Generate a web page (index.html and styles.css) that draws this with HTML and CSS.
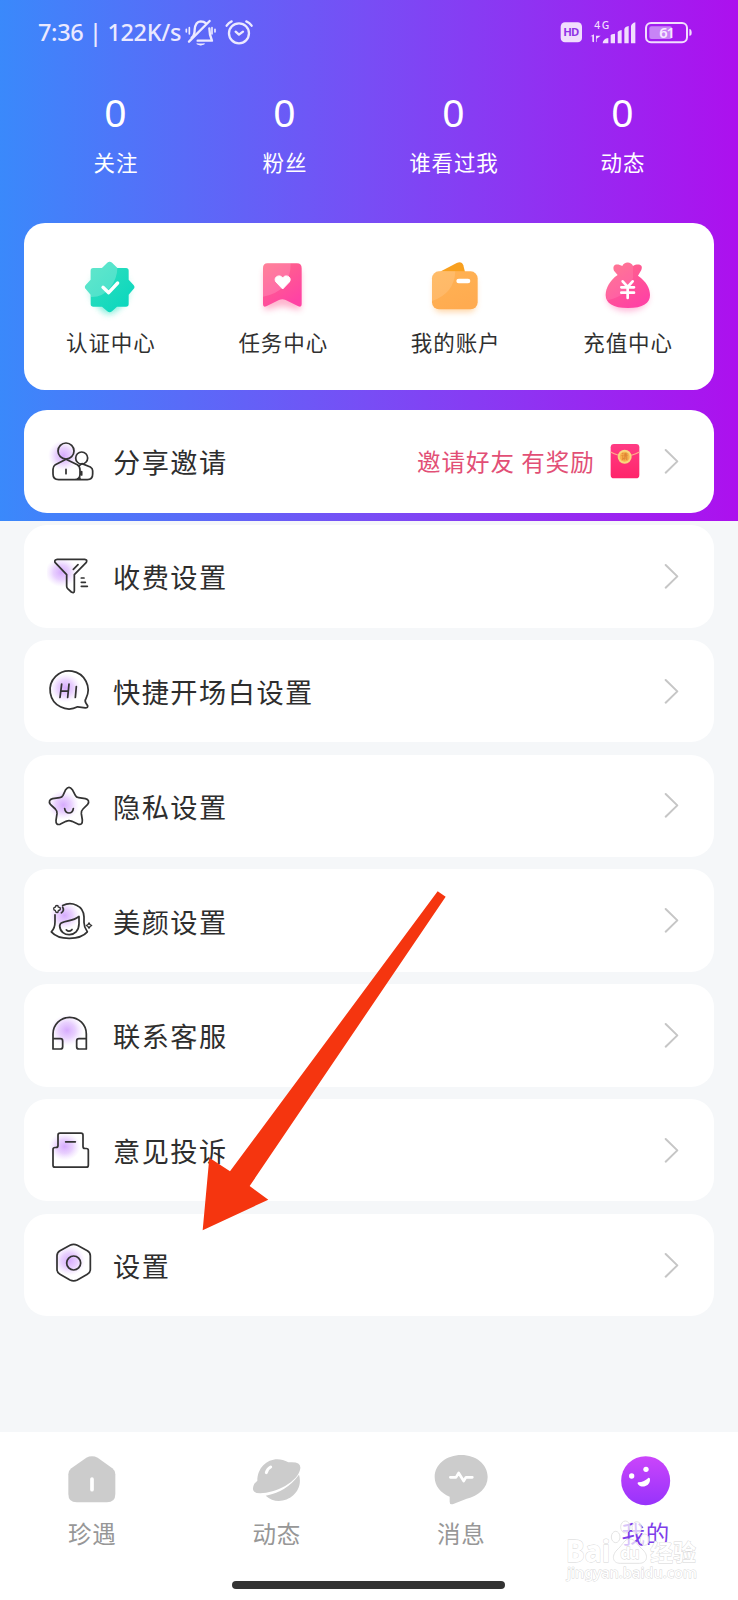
FILE: index.html
```html
<!DOCTYPE html>
<html lang="zh-CN">
<head>
<meta charset="utf-8">
<title>我的</title>
<link rel="stylesheet" href="styles.css">
</head>
<body>
<svg class="defs" width="0" height="0">
  <defs>
    <radialGradient id="glow"><stop offset="0" stop-color="#cf9bfd" stop-opacity=".85"/><stop offset=".5" stop-color="#d9b0fd" stop-opacity=".6"/><stop offset="1" stop-color="#e6ccff" stop-opacity="0"/></radialGradient>
    <linearGradient id="teal" x1="0" y1="0" x2="1" y2="1"><stop offset="0" stop-color="#37e0bd"/><stop offset="1" stop-color="#06d6be"/></linearGradient>
    <linearGradient id="pink" x1="0" y1="0" x2=".6" y2="1"><stop offset="0" stop-color="#ff6a85"/><stop offset="1" stop-color="#ff43a4"/></linearGradient>
    <linearGradient id="orange" x1="0" y1="0" x2=".5" y2="1"><stop offset="0" stop-color="#ffb354"/><stop offset="1" stop-color="#ffab50"/></linearGradient>
    <linearGradient id="violet" x1="0" y1="0" x2="0" y2="1"><stop offset="0" stop-color="#cb45fb"/><stop offset="1" stop-color="#9733fb"/></linearGradient>
    <linearGradient id="packet" x1="0" y1="0" x2="0" y2="1"><stop offset="0" stop-color="#ff3c84"/><stop offset="1" stop-color="#ff246a"/></linearGradient>
    <filter id="blur" x="-40%" y="-40%" width="180%" height="180%"><feGaussianBlur stdDeviation="10"/></filter>
    <symbol id="chevron" viewBox="0 0 48 80"><path d="M5 6 40 40 5 74" fill="none" stroke="#c6c6c6" stroke-width="6" stroke-linecap="round" stroke-linejoin="round"/></symbol>
  </defs>
</svg>
<div class="screen">
  <header class="hero">
    <div class="status">
      <span class="clock">7:36 | 122K/s</span>
      <svg class="status-left" viewBox="550 50 220 90" fill="none" stroke="#ebe9ff" stroke-width="7" stroke-linecap="round" stroke-linejoin="round">
        <path d="M576 112Q585 105 585 88Q587 64 603 63Q613 63 619 69M629 84Q629 104 637 121H594"/><path d="M568 124 630 62"/><path d="M592 131Q603 139 614 131Z" fill="#ebe9ff" stroke-width="2"/><path d="M560 87V95M569 82V101M637 82V101M646 87V95" stroke-width="5"/>
        <circle cx="718" cy="99" r="30"/><path d="M708 94 718 103 730 94M681 76Q687 67 696 63M740 63Q750 67 756 76"/>
      </svg>
      <svg class="status-right" viewBox="580 50 410 90">
        <rect x="588" y="66" width="64" height="60" rx="13" fill="#f1defd"/><text class="hd" x="596" y="108" textLength="48">HD</text>
        <text class="net" x="689" y="87" textLength="45">4G</text>
        <g fill="#f1defd"><path d="M683 124V108H677L688 102V126ZM694 124V106H708L696 115V126Z"/><path d="M714 129Q715 115 731 113V129ZM738 104Q740 101 751 100V129H738ZM759 95Q761 90 771 89V129H759ZM779 86Q781 79 792 77V129H779ZM799 77Q801 69 812 66V129H799Z"/><rect x="854" y="78" width="68" height="38" rx="6" fill="#c884f6"/><path d="M974 86Q981 87 981 97T974 106Z"/></g>
        <rect x="844" y="68" width="123" height="58" rx="15" fill="none" stroke="#f1defd" stroke-width="6"/><text class="bat" x="884" y="114" textLength="47">61</text>
      </svg>
    </div>
    <div class="stats">
      <div class="stat"><b>0</b><span>关注</span></div>
      <div class="stat"><b>0</b><span>粉丝</span></div>
      <div class="stat"><b>0</b><span>谁看过我</span></div>
      <div class="stat"><b>0</b><span>动态</span></div>
    </div>
  </header>

  <main class="content">
    <section class="quick">
      <div class="quick-item">
        <svg viewBox="226 125 210 210">
          <g id="seal"><path d="M282 248Q300 315 330 312T378 248Z" fill="#59e9cf" opacity=".6" filter="url(#blur)"/><circle cx="330" cy="238" r="62" fill="#6be9d3" opacity=".4" filter="url(#blur)"/></g>
          <path d="M323 157Q330 151 337 157L353 173H379Q387 173 387 181V208L401 223Q408 230 401 237L387 253V281Q387 289 379 289H352L337 303Q330 309 323 303L307 289H281Q273 289 273 281V253L259 237Q252 230 259 223L273 208V181Q273 173 281 173H307Z" fill="url(#teal)"/>
          <path d="M323 157Q330 151 337 157L353 173Q353 205 331 233T274 260L273 253L259 237Q252 230 259 223L273 208V181Q273 173 281 173H307Z" fill="#fff" opacity=".22"/>
          <path d="M310 231 327 247 354 218" fill="none" stroke="#fff" stroke-width="10" stroke-linecap="round" stroke-linejoin="round"/>
        </svg><span>认证中心</span>
      </div>
      <div class="quick-item">
        <svg viewBox="744 125 210 210">
          <path d="M793 180H902V300L847 288 793 300Z" fill="#ff5a93" opacity=".45" filter="url(#blur)"/>
          <path d="M803 159H891Q905 159 905 174V282Q905 292 895 288L857 269Q847 265 837 269L799 288Q789 292 789 282V174Q789 159 803 159Z" fill="url(#pink)"/>
          <path d="M803 159H872Q872 245 789 259V174Q789 159 803 159Z" fill="#fff" opacity=".16"/>
          <path d="M848 236 828 215C818 201 839 189 848 203C857 189 878 201 868 215Z" fill="#fff" stroke="#fff" stroke-width="3" stroke-linejoin="round"/>
        </svg><span>任务中心</span>
      </div>
      <div class="quick-item">
        <svg viewBox="157 125 210 210">
          <rect x="200" y="200" width="124" height="104" rx="18" fill="#ffb057" opacity=".55" filter="url(#blur)"/>
          <path d="M217 184 267 158Q282 151 287 165L292 185Z" fill="#f8a01f"/>
          <rect x="193" y="183" width="137" height="114" rx="21" fill="url(#orange)"/>
          <path d="M214 183H263Q260 250 193 272V204Q193 183 214 183Z" fill="#fff" opacity=".13"/>
          <rect x="266" y="205" width="42" height="14" rx="7" fill="#fff"/>
        </svg><span>我的账户</span>
      </div>
      <div class="quick-item">
        <svg viewBox="674 125 210 210">
          <ellipse cx="778" cy="261" rx="62" ry="42" fill="#ff5aa5" opacity=".42" filter="url(#blur)"/>
          <path id="bag" d="M748 194 737 181C730 160 748 159 762 167C767 153 789 153 794 167C808 159 826 162 819 179L809 196C835 214 845 235 845 254C845 279 824 293 779 293S712 279 712 254C712 234 724 210 748 194Z" fill="url(#pink)"/>
          <path d="M748 194 737 181C730 160 748 159 762 167C767 153 789 153 794 167V202Q784 255 716 270Q704 224 748 194Z" fill="#fff" opacity=".1"/>
          <path d="M763 213 778 230 793 213M778 230V263M759 231H797M759 247H797" fill="none" stroke="#fff" stroke-width="8" stroke-linecap="round"/>
        </svg><span>充值中心</span>
      </div>
    </section>

    <div class="rows">
      <div class="row">
        <svg class="icon" viewBox="141 109 150 150"><ellipse class="halo" cx="190" cy="168" rx="46" ry="46"/><circle cx="198" cy="154" r="24"/><path d="M198 179 232 195Q240 200 240 211V224Q240 240 224 240H176Q159 240 159 223V209Q159 200 166 195ZM240 236Q239 240 232 240H262Q278 240 278 223V213Q278 206 271 202L246 192 238 198M198 209V222M245 216V226"/><circle cx="245" cy="175" r="18"/></svg>
        <span class="label">分享邀请</span><span class="promo">邀请好友 有奖励</span>
        <svg class="packet" viewBox="655 132 90 110"><rect x="657" y="135" width="86" height="103" rx="10" fill="url(#packet)"/><path d="M657 159Q700 183 743 159" fill="none" stroke="#ffad8a" stroke-width="4"/><circle cx="699" cy="173" r="21" fill="#f8d77e"/><circle cx="699" cy="173" r="15" fill="#f7b34f"/><text class="coin" x="699" y="180">请</text></svg>
        <svg class="chevron"><use href="#chevron"/></svg>
      </div>
      <div class="row">
        <svg class="icon" viewBox="141 454 150 150"><ellipse class="halo" cx="184" cy="518" rx="48" ry="44"/><path d="M172 479H254Q263 480 259 488L223 525V573Q223 582 214 577L203 567Q200 564 200 560V525L165 488Q162 480 172 479ZM234 495 220 509M244 535H252M244 548H256M244 560H262"/></svg>
        <span class="label">收费设置</span><svg class="chevron"><use href="#chevron"/></svg>
      </div>
      <div class="row">
        <svg class="icon" viewBox="141 78.5 150 150"><ellipse class="halo" cx="196" cy="144" rx="47" ry="44"/><path d="M233 201A57 57 0 1 1 258 176Q253 183 258 190L263 198Q264 204 256 204Z"/><path d="M185 133 180 173M207 133 203 173M183 154H205M229 140 226 173"/></svg>
        <span class="label">快捷开场白设置</span><svg class="chevron"><use href="#chevron"/></svg>
      </div>
      <div class="row">
        <svg class="icon" viewBox="141 423 150 150"><ellipse class="halo" cx="190" cy="495" rx="47" ry="44"/><path d="M197 449Q207 435 217 449L226 466Q229 472 236 473L256 476Q271 480 263 493L249 507Q243 513 244 521L247 540Q248 556 235 553L216 544Q207 540 198 544L180 553Q167 556 168 541L171 521Q172 513 166 507L151 493Q143 480 158 476L179 473Q186 472 189 466ZM194 506Q196 519 207 519T220 506"/></svg>
        <span class="label">隐私设置</span><svg class="chevron"><use href="#chevron"/></svg>
      </div>
      <div class="row">
        <svg class="icon" viewBox="141 107.4 150 150"><ellipse class="halo" cx="194" cy="166" rx="46" ry="42"/><path d="M188 136C214 123 251 135 252 170V187Q252 201 262 215C240 240 178 242 154 215Q165 205 165 185V164M181 191C187 182 219 184 237 169V191C237 233 181 233 179 197ZM199 209Q207 217 216 208"/><path d="M184 158Q194 151 188 141" /><path d="M171 136Q175 136 175 141Q181 141 181 146T175 151Q175 157 171 157T166 151Q161 151 161 146T166 141Q166 136 171 136ZM267 188 270 193 275 196 270 199 267 204 264 199 259 196 264 193Z" stroke-width="4" fill="#fff"/></svg>
        <span class="label">美颜设置</span><svg class="chevron"><use href="#chevron"/></svg>
      </div>
      <div class="row">
        <svg class="icon" viewBox="141 452 150 150"><ellipse class="halo" cx="201" cy="513" rx="50" ry="47"/><path d="M159 569V524A50 50 0 0 1 259 524V569H237Q230 569 230 562V545Q230 538 237 538H258M159 538H181Q188 538 188 545V562Q188 569 181 569H159"/></svg>
        <span class="label">联系客服</span><svg class="chevron"><use href="#chevron"/></svg>
      </div>
      <div class="row">
        <svg class="icon" viewBox="141 106.5 150 150"><ellipse class="halo" cx="194" cy="171" rx="48" ry="42"/><path d="M180 131H243Q249 131 249 137V171Q249 177 255 177H259Q265 177 265 183V227Q265 233 259 233H165Q159 233 159 227V180Q159 174 165 174H168Q174 174 174 168V137Q174 131 180 131ZM197 157H226"/></svg>
        <span class="label">意见投诉</span><svg class="chevron"><use href="#chevron"/></svg>
      </div>
      <div class="row">
        <svg class="icon" viewBox="141 451 150 150"><ellipse class="halo" cx="208" cy="513" rx="48" ry="46"/><path d="M210 467Q221 461 232 467L262 483Q271 488 271 498V539Q271 549 262 554L232 571Q221 576 210 571L180 554Q171 549 171 539V498Q171 488 180 483Z"/><circle cx="221" cy="520" r="21"/></svg>
        <span class="label">设置</span><svg class="chevron"><use href="#chevron"/></svg>
      </div>
    </div>
  </main>

  <nav class="tabs">
    <div class="tab"><svg viewBox="193 128 168 168"><path d="M260 142Q277 134 294 142L338 174Q347 181 347 192V251Q347 276 322 276H231Q206 276 206 251V192Q206 181 215 174Z" fill="#ccc"/><path d="M277 206V238" stroke="#fff" stroke-width="11" stroke-linecap="round"/></svg><span>珍遇</span></div>
    <div class="tab"><svg viewBox="746 128 168 168"><path d="M771 211C771 160 821 130 864 156Q902 152 900 174C895 215 824 249 780 249Q748 248 762 220ZM896 193C914 254 838 296 796 256Q858 245 896 193Z" fill="#ccc"/><path d="M798 187Q801 175 811 170" fill="none" stroke="#fff" stroke-width="9" stroke-linecap="round"/></svg><span>动态</span></div>
    <div class="tab"><svg viewBox="196 128 168 168"><path d="M281 134C325 134 360 162 360 200C360 233 332 257 297 265L257 281Q246 285 246 274V259C219 248 201 227 201 200C201 162 237 134 281 134Z" fill="#ccc"/><path d="M248 201H265L273 188 288 212 295 201H314" fill="none" stroke="#fff" stroke-width="8" stroke-linecap="round" stroke-linejoin="round"/></svg><span>消息</span></div>
    <div class="tab active"><svg viewBox="749 128 168 168"><circle cx="832" cy="211" r="73.5" fill="url(#violet)"/><circle cx="790" cy="197" r="8" fill="#fff"/><circle cx="833" cy="177" r="8" fill="#fff"/><path d="M810 216Q828 214 841 202Q846 201 845 210C843 230 817 235 808 220Q807 217 810 216Z" fill="#fff"/></svg><span>我的</span></div>
  </nav>
  <div class="home-bar"></div>

  <svg class="arrow" viewBox="0 0 810 1140"><path d="M713 64 737 80 149 948 205 989 8 1081 28 863 90 904Z" fill="#f5350f"/></svg>

  <svg class="watermark" viewBox="580 320 420 210">
    <g fill="#fff" fill-opacity=".7" stroke="#dedede" stroke-width="2.5"><ellipse cx="744" cy="380" rx="13" ry="17"/><ellipse cx="773" cy="350" rx="14" ry="18"/><ellipse cx="807" cy="352" rx="14" ry="18"/><ellipse cx="831" cy="388" rx="13" ry="17"/><path d="M786 386C803 386 807 402 822 415C846 435 838 459 815 459H758C734 459 729 435 752 415C766 402 770 386 786 386Z"/></g>
    <text class="wm-big" x="594" y="456" textLength="134" lengthAdjust="spacingAndGlyphs">Bai</text>
    <text class="wm-du" x="758" y="446" textLength="58">du</text>
    <text class="wm-cjk" x="848" y="452" textLength="137">经验</text>
    <text class="wm-url" x="598" y="504" textLength="390" lengthAdjust="spacingAndGlyphs">jingyan.baidu.com</text>
  </svg>
</div>
</body>
</html>
```
FILE: styles.css
```css
* { box-sizing: border-box; }
body { margin: 0; font-family: "Noto Sans", "Noto Sans CJK SC", sans-serif; }
.defs { position: absolute; }
svg { display: block; flex: none; }
.screen {
  position: relative;
  width: 738px;
  height: 1600px;
  overflow: hidden;
  display: flex;
  flex-direction: column;
  background: linear-gradient(90deg, #3a89fb 0%, #784df5 50%, #ad10ee 100%) 0 0 / 100% 521px no-repeat, #f5f7f9;
}
.hero { height: 223px; flex: none; }
.status { display: flex; align-items: center; height: 64px; padding: 0 43px 0 38px; }
.clock { width: 145px; font-size: 23.5px; font-weight: 500; color: #ebe9ff; white-space: pre; letter-spacing: -.35px; }
.status-left { width: 73.3px; height: 30px; }
.status-right { width: 136.7px; height: 30px; margin-left: auto; }
.hd { font: 700 34px "Noto Sans", sans-serif; fill: #9136e6; }
.net { font: 500 31px "Noto Sans", sans-serif; fill: #f1defd; }
.bat { font: 600 44px "Noto Sans", sans-serif; fill: #f6e9ff; }

.stats { display: grid; grid-template-columns: repeat(4, 169px); padding-left: 31px; padding-top: 22px; color: #fff; }
.stat { display: flex; flex-direction: column; align-items: center; }
.stat b { font-weight: 400; font-size: 39px; line-height: 52px; }
.stat span { margin-top: 9px; font-family: "Noto Sans CJK SC", sans-serif; font-size: 21.5px; line-height: 30px; letter-spacing: .9px; margin-right: -.9px; }

.content { padding: 0 24.2px; }
.quick { display: grid; grid-template-columns: repeat(4, 1fr); height: 167px; padding-top: 28.7px; background: #fff; border-radius: 21px; }
.quick-item { display: flex; flex-direction: column; align-items: center; }
.quick-item svg { width: 70px; height: 70px; }
.quick-item span { margin-top: 5px; font-family: "Noto Sans CJK SC", sans-serif; font-size: 21.5px; line-height: 30px; letter-spacing: .9px; margin-right: -.9px; color: #303030; }

.rows { display: flex; flex-direction: column; gap: 12.2px; margin-top: 20.2px; }
.row { display: flex; align-items: center; height: 102.6px; padding: 0 34px 0 22.8px; background: #fff; border-radius: 23px; font-family: "Noto Sans CJK SC", sans-serif; }
.icon { width: 50px; height: 50px; fill: none; stroke: #333; stroke-width: 5.2; stroke-linecap: round; stroke-linejoin: round; }
.halo { fill: url(#glow); stroke: none; }
.label { margin: 0 auto 0 16px; font-size: 27.2px; line-height: 40px; letter-spacing: 1.5px; color: #2e2e2e; }
.promo { font-size: 23.5px; letter-spacing: 1px; color: #e24f76; }
.packet { width: 30px; height: 36.7px; margin: 0 24px 0 15px; }
.coin { font: 700 20px "Noto Sans CJK SC", sans-serif; fill: #df8432; text-anchor: middle; }
.chevron { width: 16px; height: 26.7px; }

.tabs { display: grid; grid-template-columns: repeat(4, 1fr); height: 168px; margin-top: auto; padding-top: 20.7px; background: #fff; flex: none; }
.tab { display: flex; flex-direction: column; align-items: center; color: #979797; }
.tab svg { width: 56px; height: 56px; }
.tab span { margin-top: 8px; font-family: "Noto Sans CJK SC", sans-serif; font-size: 23.5px; line-height: 32px; letter-spacing: .7px; }
.tab.active { color: #7e3eea; }
.home-bar { position: absolute; left: 232px; top: 1581px; width: 273px; height: 8px; border-radius: 4px; background: #333; }
.arrow { position: absolute; left: 200px; top: 870px; width: 270px; height: 380px; }
.watermark { position: absolute; left: 561.3px; top: 1516.7px; width: 140px; height: 70px; }
.wm-big, .wm-du, .wm-cjk, .wm-url { fill: #fff; stroke: #d6d6d6; stroke-width: 2.5; paint-order: stroke; font-family: "Noto Sans", sans-serif; font-weight: 700; }
.wm-big { font-size: 90px; }
.wm-du { font-size: 50px; }
.wm-cjk { font-family: "Noto Sans CJK SC", sans-serif; font-size: 68px; }
.wm-url { font-size: 42px; font-weight: 500; }
```
